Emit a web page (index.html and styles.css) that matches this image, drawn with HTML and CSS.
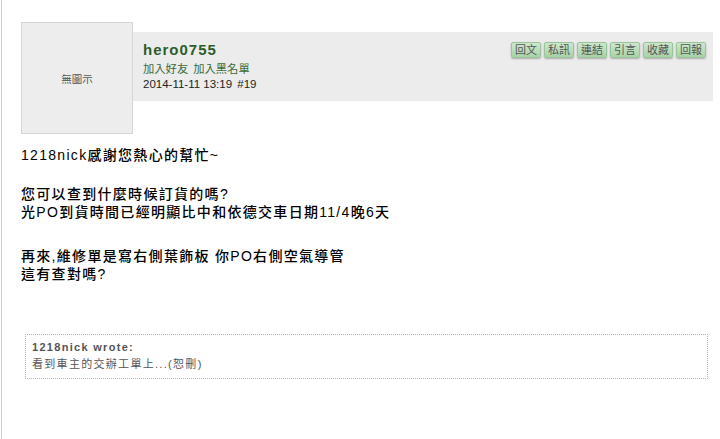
FILE: index.html
```html
<!DOCTYPE html>
<html lang="zh-Hant">
<head>
<meta charset="utf-8">
<title>hero0755 #19</title>
<link rel="stylesheet" href="styles.css">
</head>
<body>
<div class="post">
  <div class="post-head">
    <div class="avatar">無圖示</div>
    <div class="bar">
      <div class="info">
        <div class="name">hero0755</div>
        <div class="links"><span>加入好友</span><span>加入黑名單</span></div>
        <div class="date">2014-11-11 13:19 <span class="num">#19</span></div>
      </div>
      <div class="btns">
        <span class="btn">回文</span>
        <span class="btn">私訊</span>
        <span class="btn">連結</span>
        <span class="btn">引言</span>
        <span class="btn">收藏</span>
        <span class="btn">回報</span>
      </div>
    </div>
  </div>
  <div class="content">
    <p class="para gap1">1218nick感謝您熱心的幫忙~</p>
    <p class="para gap2">您可以查到什麼時候訂貨的嗎?<br>光PO到貨時間已經明顯比中和依德交車日期11/4晚6天</p>
    <p class="para">再來,維修單是寫右側葉飾板 你PO右側空氣導管<br>這有查對嗎?</p>
  </div>
  <div class="quote">
    <div class="quote-who">1218nick wrote:</div>
    <div class="quote-text">看到車主的交辦工單上...(恕刪)</div>
  </div>
</div>
</body>
</html>
```
FILE: styles.css
```css
html, body {
  margin: 0;
  padding: 0;
  background: #fff;
}
body {
  font-family: "Liberation Sans", "Noto Sans CJK TC", sans-serif;
  color: #111;
}
.post {
  margin-left: 1px;
  border-left: 1px solid #cfcfcf;
  height: 439px;
  box-sizing: border-box;
  padding: 22px 7px 0 19px;
}
.post-head {
  display: flex;
  align-items: flex-start;
}
.avatar {
  width: 110px;
  height: 110px;
  border: 1px solid #d6d6d6;
  background: #ededed;
  display: flex;
  align-items: center;
  justify-content: center;
  font-size: 10.5px;
  color: #555;
  flex: none;
}
.bar {
  flex: 1;
  margin-top: 10px;
  height: 69px;
  background: #ececec;
  display: flex;
  justify-content: space-between;
  align-items: flex-start;
  padding: 8px 7px 0 10px;
  box-sizing: border-box;
}
.name {
  font-size: 15px;
  font-weight: bold;
  letter-spacing: 1px;
  line-height: 19px;
  color: #2d5e2a;
}
.links {
  margin-top: 3px;
  font-size: 11.3px;
  line-height: 15px;
  color: #3b6b35;
  display: flex;
  gap: 5px;
}
.date {
  font-size: 11.5px;
  line-height: 14px;
  color: #222;
}
.num {
  margin-left: 2px;
}
.btns {
  display: flex;
  gap: 3px;
  margin-top: 2px;
}
.btn {
  width: 28px;
  height: 14px;
  box-sizing: content-box;
  border: 1px solid #9cc49c;
  border-radius: 2px;
  background: linear-gradient(#cce8cc, #a8d2a8);
  box-shadow: 0 1px 2px rgba(0, 0, 0, 0.28);
  font-size: 11px;
  line-height: 14px;
  text-align: center;
  color: #555;
}
.content {
  margin-top: 12px;
  font-size: 14px;
  font-weight: 500;
  letter-spacing: 1.3px;
  line-height: 18px;
  color: #000;
}
.para {
  margin: 0;
}
.gap1 {
  margin-bottom: 21px;
}
.gap2 {
  margin-bottom: 26px;
}
.quote {
  margin: 51px 5px 0 4px;
  border: 1px dotted #b5b5b5;
  padding: 4px 6px 5px;
  font-size: 11px;
  line-height: 17px;
  letter-spacing: 1.3px;
  color: #555;
}
.quote-who {
  font-weight: bold;
}
```
